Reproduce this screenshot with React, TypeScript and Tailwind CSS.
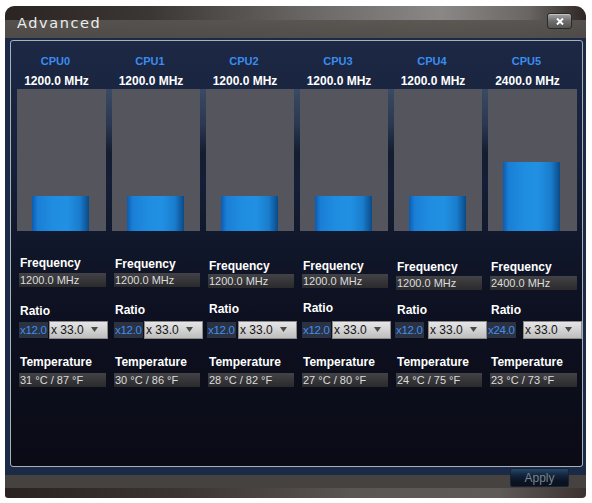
import React from "react";

type Col = {
  name: string;
  mhz: string;
  barH: string;
  freq: string;
  ratio: string;
  temp: string;
  fl: string;
  fb: string;
  rl: string;
  rr: string;
  gap: string;
  xml: string;
};

const cols: Col[] = [
  { name: "CPU0", mhz: "1200.0 MHz", barH: "h-[35px]", freq: "1200.0 MHz", ratio: "x12.0", temp: "31 °C / 87 °F", fl: "mt-[25px]", fb: "mt-[3px]", rl: "mt-[17px]", rr: "mt-[3px]", gap: "gap-[1px]", xml: "ml-[2px]" },
  { name: "CPU1", mhz: "1200.0 MHz", barH: "h-[35px]", freq: "1200.0 MHz", ratio: "x12.0", temp: "30 °C / 86 °F", fl: "mt-[26px]", fb: "mt-[2px]", rl: "mt-[16px]", rr: "mt-[4px]", gap: "gap-[1px]", xml: "ml-[2px]" },
  { name: "CPU2", mhz: "1200.0 MHz", barH: "h-[35px]", freq: "1200.0 MHz", ratio: "x12.0", temp: "28 °C / 82 °F", fl: "mt-[28px]", fb: "mt-[1px]", rl: "mt-[14px]", rr: "mt-[5px]", gap: "gap-[2px]", xml: "ml-[1px]" },
  { name: "CPU3", mhz: "1200.0 MHz", barH: "h-[35px]", freq: "1200.0 MHz", ratio: "x12.0", temp: "27 °C / 80 °F", fl: "mt-[28px]", fb: "mt-[1px]", rl: "mt-[13px]", rr: "mt-[6px]", gap: "gap-[1px]", xml: "ml-[2px]" },
  { name: "CPU4", mhz: "1200.0 MHz", barH: "h-[35px]", freq: "1200.0 MHz", ratio: "x12.0", temp: "24 °C / 75 °F", fl: "mt-[29px]", fb: "mt-[2px]", rl: "mt-[13px]", rr: "mt-[4px]", gap: "gap-[4px]", xml: "ml-[1px]" },
  { name: "CPU5", mhz: "2400.0 MHz", barH: "h-[69px]", freq: "2400.0 MHz", ratio: "x24.0", temp: "23 °C / 73 °F", fl: "mt-[29px]", fb: "mt-[2px]", rl: "mt-[13px]", rr: "mt-[4px]", gap: "gap-[7px]", xml: "ml-[-1px]" },
];

const widths = ["w-[89px]", "w-[88px]", "w-[88px]", "w-[88px]", "w-[88px]", "w-[89px]"];

const font = "font-['Liberation_Sans',Arial,sans-serif]";

function ValueBox({ text, cls }: { text: string; cls: string }) {
  return (
    <div
      className={`${cls} ml-[2px] h-[14px] pl-[1px] bg-[linear-gradient(to_bottom,#434347,#2a2a2d)] text-[11px] leading-[14px] text-[#dcdcdc] whitespace-nowrap`}
    >
      {text}
    </div>
  );
}

function Label({ text, cls }: { text: string; cls: string }) {
  return (
    <div className={`${cls} ml-[3px] h-[14px] text-[12px] leading-[14px] font-bold text-white whitespace-nowrap`}>
      {text}
    </div>
  );
}

export default function App() {
  return (
    <div className={`w-[592px] h-[503px] bg-white pt-[6px] pl-[5px] overflow-hidden ${font}`}>
      <div className="relative w-[581px] h-[492px] flex flex-col rounded-tl-[9px] rounded-tr-[11px] rounded-bl-[3px] rounded-br-[4px] overflow-hidden">
        {/* Title bar */}
        <div className="relative h-[32px] flex items-center justify-between pl-[12px] pr-[14px] bg-[linear-gradient(to_bottom,transparent_14px,rgba(88,84,80,0.92)_14px,rgba(80,76,73,0.95)_100%),linear-gradient(to_right,#2a2422_0%,#3b3735_25%,#6e6c6a_55%,#8a8886_75%,#6a6664_90%,#2e2624_100%)]">
          <span className="font-['DejaVu_Sans',sans-serif] text-[14.5px] tracking-[1.6px] text-[#ececec] leading-none mt-[2px]">
            Advanced
          </span>
          <div className="mb-[2px] w-[25px] h-[16px] rounded-[3px] border border-[#2a2828] bg-[linear-gradient(to_bottom,#a6a6a6,#6e6e6e_50%,#555555)] flex items-center justify-center shadow-[inset_0_1px_0_rgba(255,255,255,0.35)]">
            <svg width="8" height="7" viewBox="0 0 8 7">
              <path d="M1 0.5 L7 6.5 M7 0.5 L1 6.5" stroke="#ffffff" strokeWidth="2" />
            </svg>
          </div>
        </div>

        {/* Blue frame body */}
        <div className="h-[437px] bg-[#1b2a46] pt-[2px] pl-[5px] pr-[3px] pb-[8px]">
          <div className="h-full rounded-[3px] border border-[#aab0b8] bg-[linear-gradient(to_bottom,#1c2844_0%,#17203a_30%,#10172a_48%,#0d1020_65%,#0b0b16_100%)] pl-[6px] pt-[14px]">
            {/* Headers */}
            <div className="flex gap-x-[6px]">
              {cols.map((c, i) => (
                <div key={c.name} className={`${widths[i]} flex flex-col items-center`}>
                  <div className="pr-[12px] h-[13px] text-[11px] leading-[13px] font-bold text-[#3a8cf0]">{c.name}</div>
                  <div className="pr-[10px] mt-[7px] h-[13px] text-[12px] leading-[13px] font-bold text-white whitespace-nowrap">{c.mhz}</div>
                </div>
              ))}
            </div>

            {/* Bars */}
            <div className="flex mt-[1px]">
              {cols.map((c, i) => (
                <React.Fragment key={c.name}>
                  {i > 0 && (
                    <div className="w-[6px] h-[142px] bg-[linear-gradient(to_bottom,#3a4a64_0%,#2a3850_25%,#141c30_45%,transparent_70%)]" />
                  )}
                  <div className={`${widths[i]} h-[142px] bg-[#55555d] flex items-end pl-[15px]`}>
                    <div
                      className={`${c.barH} w-[57px] bg-[linear-gradient(to_right,#0b5cb0_0%,#1a7fd6_10%,#1f8ce0_35%,#2190e2_62%,#1a7ccc_84%,#0a4a86_100%)]`}
                    />
                  </div>
                </React.Fragment>
              ))}
            </div>

            {/* Details */}
            <div className="flex gap-x-[6px]">
              {cols.map((c, i) => (
                <div key={c.name} className={`${widths[i]} flex flex-col`}>
                  <Label text="Frequency" cls={c.fl} />
                  <ValueBox text={c.freq} cls={c.fb} />
                  <Label text="Ratio" cls={c.rl} />
                  <div className={`${c.rr} ${c.xml} ${c.gap} h-[17px] flex items-center`}>
                    <div className="w-[29px] h-[16px] shrink-0 bg-[#2b3242] text-[11.5px] tracking-[-0.3px] leading-[16px] text-[#3f8ff0] pl-[1px] whitespace-nowrap overflow-hidden">
                      {c.ratio}
                    </div>
                    <div className="w-[59px] h-[18px] shrink-0 border border-[#8a8a8a] bg-[linear-gradient(to_bottom,#e6e6e6,#cfcfcf_60%,#bdbdbd)] flex items-center justify-between pl-[1px] pr-[9px]">
                      <span className="text-[12px] leading-none text-[#141414] whitespace-nowrap">x 33.0</span>
                      <svg width="7" height="5" viewBox="0 0 7 5">
                        <path d="M0 0 L7 0 L3.5 5 Z" fill="#4a4a4a" />
                      </svg>
                    </div>
                  </div>
                  <Label text="Temperature" cls="mt-[17px]" />
                  <ValueBox text={c.temp} cls="mt-[4px]" />
                </div>
              ))}
            </div>
          </div>
        </div>

        {/* Bottom bar */}
        <div className="h-[23px] bg-[linear-gradient(to_bottom,#46423f_0px,#46423f_13px,transparent_13px),linear-gradient(to_right,#2a2220_0%,#3a3432_30%,#5a5654_60%,#5e5a58_85%,#3a3230_100%)]" />

        {/* Apply button (overlaps frame edge) */}
        <div className="absolute left-[505px] top-[462px] w-[59px] h-[19px] rounded-[2px] border border-[#1c2330] bg-[linear-gradient(to_bottom,#24486c_0%,#13263e_35%,#0b1424_70%,#0a111e_100%)] flex items-center justify-center">
          <span className="text-[12px] leading-none text-[#7c838a]">Apply</span>
        </div>
      </div>
    </div>
  );
}
